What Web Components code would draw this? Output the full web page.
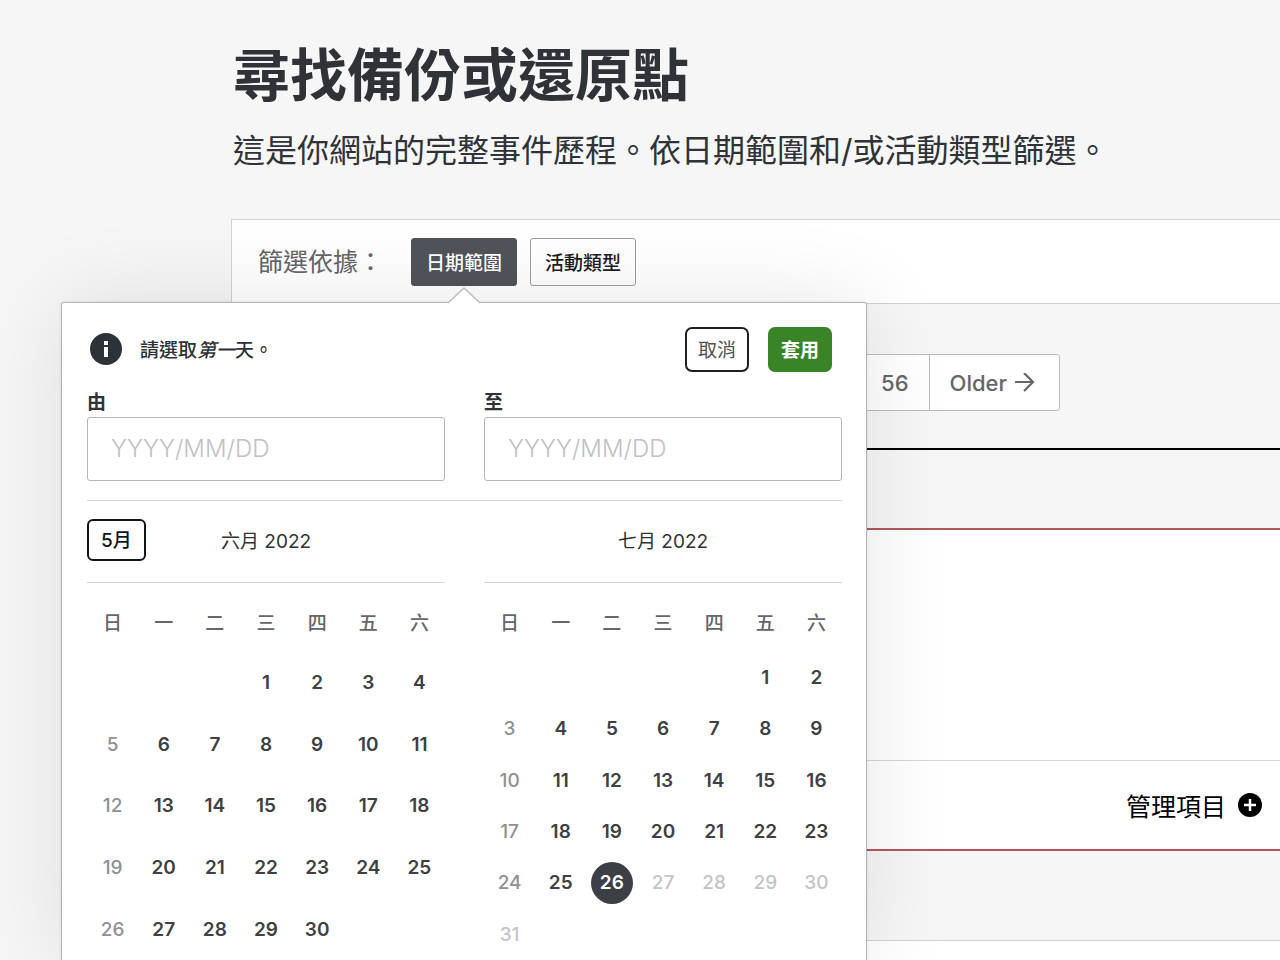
<!DOCTYPE html>
<html lang="zh-Hant">
<head>
<meta charset="utf-8">
<meta name="viewport" content="width=device-width, initial-scale=1">
<title>尋找備份或還原點</title>
<style>
  html { background: #f6f6f7; }
  body {
    margin: 0;
    overflow-x: hidden;
    font-family: Inter, "Noto Sans CJK TC", sans-serif;
    font-size: 19px;
    color: #2f3236;
  }
</style>
</head>
<body>
<backup-page></backup-page>

<script>
const define = (name, html, setup) => {
  const template = document.createElement('template');
  template.innerHTML = html;
  customElements.define(name, class extends HTMLElement {
    connectedCallback() {
      if (this.shadowRoot) return;
      const root = this.attachShadow({ mode: 'open' });
      root.append(template.content.cloneNode(true));
      if (setup) setup(root, this);
    }
  });
};

const WEEKDAYS = ['日', '一', '二', '三', '四', '五', '六'];

/* One month: caption row with an optional "previous" button, then the day table. */
define('month-calendar', `
  <style>
    :host { display: block; flex: 1; min-width: 0; }
    header {
      display: grid;
      grid-template-columns: 1fr auto 1fr;
      align-items: center;
      box-sizing: border-box;
      height: 82px;
      padding-bottom: 2px;
      border-bottom: 1px solid #d4d5d7;
    }
    h2 { grid-column: 2; margin: 0; padding-top: 4px; font-size: 19px; font-weight: 400; line-height: 28px; }
    table { width: 100%; height: 378px; table-layout: fixed; border-collapse: collapse; }
    th { height: 62px; padding: 8px 0 0; font-weight: 500; color: #646668; }
    td { padding: 0; text-align: center; vertical-align: middle; }
    td button {
      width: 42px; height: 42px; padding: 0;
      border: 0; border-radius: 50%; background: none;
      font: inherit; font-weight: 600; line-height: 24px; color: #3e4042;
      display: block; margin: 0 auto;
    }
    td:first-child button { font-weight: 500; color: #8e9092; }
    td button:disabled { font-weight: 500; color: #c3c4c6; }
    td button[aria-current] { background: #3c4046; color: #fff; }
  </style>
  <header><slot name="prev"></slot><h2></h2></header>
  <table><thead><tr></tr></thead><tbody></tbody></table>
`, (root, host) => {
  const start = Number(host.getAttribute('start'));
  const days = Number(host.getAttribute('days'));
  const today = Number(host.getAttribute('today')) || 0;
  root.querySelector('h2').textContent = host.getAttribute('label');
  for (const day of WEEKDAYS) {
    const th = document.createElement('th');
    th.scope = 'col';
    th.textContent = day;
    root.querySelector('thead tr').append(th);
  }
  const body = root.querySelector('tbody');
  for (let first = 1 - start; first <= days; first += 7) {
    const row = body.insertRow();
    for (let d = first; d < first + 7; d++) {
      const cell = row.insertCell();
      if (d < 1 || d > days) continue;
      const button = document.createElement('button');
      button.type = 'button';
      button.textContent = d;
      if (today && d === today) button.setAttribute('aria-current', 'date');
      if (today && d > today) button.disabled = true;
      cell.append(button);
    }
  }
});

define('date-field', `
  <style>
    :host { display: block; flex: 1; min-width: 0; }
    label { display: block; font-weight: 600; line-height: 28px; padding-top: 1px; }
    input {
      display: block; box-sizing: border-box; width: 100%; height: 64px;
      padding: 0 23px; border: 1px solid #b4b6b9; border-radius: 3px;
      background: #fff; font: inherit; font-size: 24px; color: #2c3338;
    }
    input::placeholder { color: #bfc0c3; opacity: 1; font-weight: 300; }
  </style>
  <label for="date"><slot></slot></label>
  <input id="date" type="text" placeholder="YYYY/MM/DD">
`);

define('date-popover', `
  <style>
    :host {
      display: block; box-sizing: border-box; width: 806px; padding: 24px 24px 0 25px;
      border: 1px solid #b4b6b9; border-radius: 3px; background: #fff;
      box-shadow: 0 0 2px rgba(0,0,0,.16), 0 0 88px rgba(0,0,0,.1);
    }
    .arrow { position: absolute; top: -16px; left: 50%; margin-left: -16px; display: block; }
    .bar { display: flex; align-items: center; height: 45px; padding: 0 10px 0 3px; }
    .bar p { flex: 1; margin: 0 0 0 18px; padding-top: 4px; font-weight: 500; line-height: 28px; }
    .bar button {
      width: 64px; height: 45px; padding: 0 0 2px; margin-left: 19px;
      border: 2px solid #1d2023; border-radius: 7px; background: #fff;
      font: inherit; font-weight: 400; color: #505356;
    }
    .bar button.apply { border-color: #3a8428; background: #3a8428; color: #fff; font-weight: 600; }
    .pair { display: flex; gap: 39px; }
    .fields { margin-top: 16px; padding-bottom: 19px; border-bottom: 1px solid #d4d5d7; }
    .prev {
      justify-self: start; height: 42px; padding: 0 12px 4px;
      border: 2px solid #101517; border-radius: 6px; background: #fff;
      font: inherit; font-weight: 500; color: #101517;
    }
  </style>
  <svg class="arrow" width="32" height="17" viewBox="0 0 32 17" aria-hidden="true">
    <path d="M0 17V16.500L16 1L32 16.500V17Z" fill="#fff"/>
    <path d="M0 16L16 1L32 16" fill="none" stroke="#b9bbbe" stroke-width="1.500"/>
  </svg>
  <div class="bar">
    <svg width="32" height="32" viewBox="0 0 32 32" aria-hidden="true">
      <circle cx="16" cy="16" r="16" fill="#2c3338"/>
      <rect x="14" y="8" width="4" height="4" fill="#fff"/>
      <rect x="14" y="14" width="4" height="10" fill="#fff"/>
    </svg>
    <p>請選取<em>第一</em>天。</p>
    <button type="button">取消</button>
    <button type="button" class="apply">套用</button>
  </div>
  <div class="pair fields">
    <date-field>由</date-field>
    <date-field>至</date-field>
  </div>
  <div class="pair">
    <month-calendar label="六月 2022" start="3" days="30">
      <button slot="prev" class="prev" type="button">5月</button>
    </month-calendar>
    <month-calendar label="七月 2022" start="5" days="31" today="26"></month-calendar>
  </div>
`);

define('filter-bar', `
  <style>
    :host {
      display: flex; align-items: center; box-sizing: border-box; height: 85px;
      padding-left: 26px; border: 1px solid #d0d1d3; border-right: 0; background: #fff;
    }
    .label { margin-right: 28px; font-size: 25px; line-height: 36px; color: #646668; }
    .anchor { position: relative; margin-right: 13px; }
    button {
      display: block; height: 48px; padding: 0 14px;
      border: 1px solid #9c9ea1; border-radius: 3px; background: #fff;
      font: inherit; font-weight: 500; color: #1d2023;
    }
    button[aria-expanded="true"] { border-color: #50535a; background: #50535a; color: #fff; }
    date-popover { position: absolute; z-index: 1; top: 64px; left: 50%; transform: translateX(-50%); }
  </style>
  <span class="label">篩選依據：</span>
  <div class="anchor">
    <button type="button" aria-expanded="true">日期範圍</button>
    <date-popover></date-popover>
  </div>
  <button type="button">活動類型</button>
`);

define('page-nav', `
  <style>
    :host { display: flex; justify-content: flex-end; padding-right: 220px; }
    nav { display: flex; border: 1px solid #bbbdbf; border-radius: 3px; background: #fff; }
    a {
      display: flex; align-items: center; gap: 8px; height: 55px; padding: 0 20px;
      font-size: 22px; font-weight: 500; color: #646668; text-decoration: none;
    }
    a + a { border-left: 1px solid #bbbdbf; padding-right: 24px; }
  </style>
  <nav>
    <a href="#56">56</a>
    <a href="#older">Older
      <svg width="20" height="20" viewBox="0 0 20 20" fill="none" stroke="currentColor" stroke-width="2.200" aria-hidden="true">
        <path d="M0 9H18M9 0L18 9L9 18"/>
      </svg>
    </a>
  </nav>
`);

define('activity-card', `
  <style>
    :host { display: block; border-top: 1px solid #d0d1d3; background: #fff; }
    :host([alert]) { border-top: 2px solid #b4575b; border-bottom: 2px solid #b4575b; }
    .body { min-height: 230px; }
    footer { display: flex; justify-content: flex-end; border-top: 1px solid #d4d5d7; padding-right: 18px; }
    :host(:not([alert])) footer { display: none; }
    button {
      display: flex; align-items: center; gap: 12px; height: 88px; padding: 0 0 1px;
      border: 0; background: none; font: inherit; font-size: 25px; color: #000;
    }
  </style>
  <div class="body"></div>
  <footer>
    <button type="button">管理項目
      <svg width="24" height="24" viewBox="0 0 24 24" aria-hidden="true">
        <circle cx="12" cy="12" r="12" fill="#000"/>
        <path d="M12 6V18M6 12H18" stroke="#fff" stroke-width="2.500"/>
      </svg>
    </button>
  </footer>
`);

define('backup-page', `
  <style>
    :host { display: block; padding: 44px 0 0 231px; }
    .intro { padding-left: 2px; }
    h1 { margin: 0; font-size: 57px; font-weight: 600; line-height: 64px; }
    p { margin: 23px 0 48px; font-size: 32px; line-height: 40px; }
    page-nav { margin: 50px 0 37px; }
    section { border-top: 2px solid #000; padding-top: 78px; }
    activity-card { margin-bottom: 89px; }
  </style>
  <main>
    <div class="intro">
      <h1>尋找備份或還原點</h1>
      <p>這是你網站的完整事件歷程。依日期範圍和/或活動類型篩選。</p>
    </div>
    <filter-bar></filter-bar>
    <page-nav></page-nav>
    <section>
      <activity-card alert></activity-card>
      <activity-card></activity-card>
    </section>
  </main>
`);
</script>
</body>
</html>
